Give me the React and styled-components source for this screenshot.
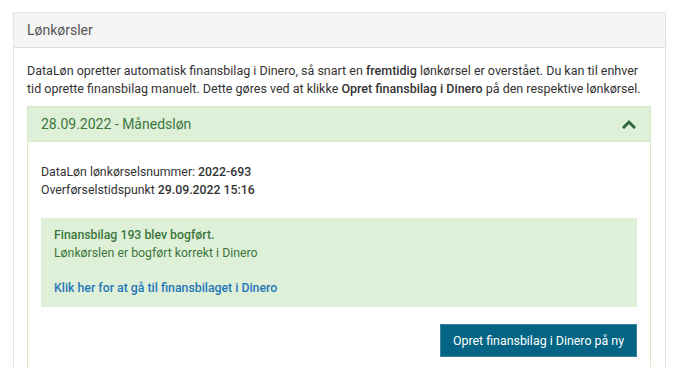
import React, { useState } from 'react';
import styled, { createGlobalStyle } from 'styled-components';

const GlobalStyle = createGlobalStyle`
  body {
    margin: 0;
    background: #fff;
    font-family: Roboto, 'Liberation Sans', sans-serif;
    color: #333;
  }
  b {
    font-weight: 500;
  }
`;

const Page = styled.div`
  padding: 12px 22px 0 13px;
`;

const Panel = styled.section`
  border: 1px solid #e3e3e3;
  border-bottom: none;
`;

const PanelHeader = styled.div`
  height: 34px;
  display: flex;
  align-items: center;
  padding: 0 13px;
  background: #f5f5f5;
  border-bottom: 1px solid #dedede;
  color: #555;
  font-size: 14px;
`;

const PanelBody = styled.div`
  padding: 14px 14px 0 13px;
`;

const Intro = styled.p`
  margin: 0 0 9px;
  font-size: 12.5px;
  line-height: 17.5px;
  color: #333;
`;

const Accordion = styled.div`
  border: 1px solid #d6e9c6;
  border-bottom: none;
`;

const AccordionHeader = styled.button`
  width: 100%;
  height: 35px;
  display: flex;
  align-items: center;
  justify-content: space-between;
  padding: 0 14px 0 13px;
  border: none;
  border-bottom: 1px solid #d6e9c6;
  background: #dff0d8;
  color: #3c763d;
  font-family: inherit;
  font-size: 14px;
  cursor: pointer;
`;

const AccordionBody = styled.div`
  padding: 22px 13px 10px 13px;
`;

const InfoLine = styled.div`
  font-size: 12.3px;
  line-height: 17.5px;
  color: #333;
`;

const Alert = styled.div`
  margin-top: 19px;
  padding: 9px 13px 10px;
  background: #dff0d8;
  color: #3c763d;
  font-size: 12.3px;
  line-height: 17.5px;
`;

const AlertTitle = styled.div`
  font-weight: 500;
`;

const AlertLink = styled.a`
  display: block;
  margin-top: 17.5px;
  color: #1f77b8;
  font-weight: 500;
  text-decoration: none;
`;

const Actions = styled.div`
  display: flex;
  justify-content: flex-end;
  margin-top: 17px;
`;

const PrimaryButton = styled.button`
  height: 33px;
  padding: 0 12px;
  border: 1px solid #3e7f99;
  background: #036583;
  color: #fff;
  font-family: inherit;
  font-size: 12.4px;
  cursor: pointer;
`;

const Chevron = ({ open }) => (
  <svg width="14" height="10" viewBox="0 0 14 10" style={{ transform: open ? 'none' : 'rotate(180deg)' }}>
    <path d="M2 8 L7 3 L12 8" fill="none" stroke="#2d6a3a" strokeWidth="3" strokeLinecap="square" />
  </svg>
);

export default function App() {
  const [open, setOpen] = useState(true);

  return (
    <Page>
      <GlobalStyle />
      <Panel>
        <PanelHeader>Lønkørsler</PanelHeader>
        <PanelBody>
          <Intro>
            DataLøn opretter automatisk finansbilag i Dinero, så snart en <b>fremtidig</b> lønkørsel er overstået. Du kan til enhver
            tid oprette finansbilag manuelt. Dette gøres ved at klikke <b>Opret finansbilag i Dinero</b> på den respektive lønkørsel.
          </Intro>
          <Accordion>
            <AccordionHeader onClick={() => setOpen(!open)}>
              <span>28.09.2022 - Månedsløn</span>
              <Chevron open={open} />
            </AccordionHeader>
            {open && (
              <AccordionBody>
                <InfoLine>DataLøn lønkørselsnummer: <b>2022-693</b></InfoLine>
                <InfoLine>Overførselstidspunkt <b>29.09.2022 15:16</b></InfoLine>
                <Alert>
                  <AlertTitle>Finansbilag 193 blev bogført.</AlertTitle>
                  <div>Lønkørslen er bogført korrekt i Dinero</div>
                  <AlertLink href="#">Klik her for at gå til finansbilaget i Dinero</AlertLink>
                </Alert>
                <Actions>
                  <PrimaryButton>Opret finansbilag i Dinero på ny</PrimaryButton>
                </Actions>
              </AccordionBody>
            )}
          </Accordion>
        </PanelBody>
      </Panel>
    </Page>
  );
}
